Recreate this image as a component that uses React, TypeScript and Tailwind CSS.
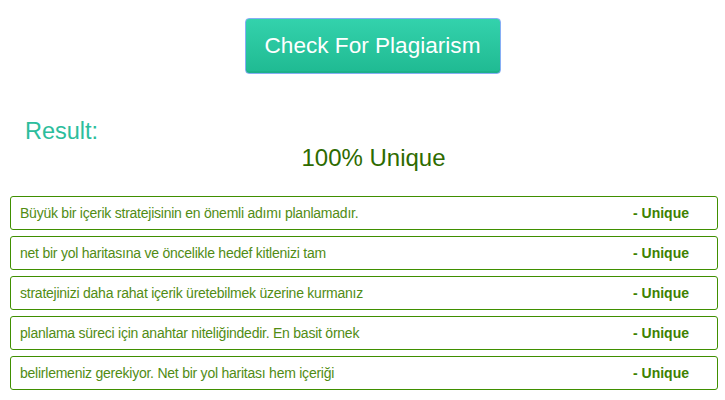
import React from "react";

const rows = [
  "Büyük bir içerik stratejisinin en önemli adımı planlamadır.",
  "net bir yol haritasına ve öncelikle hedef kitlenizi tam",
  "stratejinizi daha rahat içerik üretebilmek üzerine kurmanız",
  "planlama süreci için anahtar niteliğindedir. En basit örnek",
  "belirlemeniz gerekiyor. Net bir yol haritası hem içeriği",
];

export default function App() {
  return (
    <div className="w-[725px] h-[400px] bg-white overflow-hidden" style={{ fontFamily: '"Liberation Sans", Arial, sans-serif' }}>
      <div className="flex justify-center pt-[18px] pl-[20px]">
        <button className="w-[256px] h-[56px] rounded-[4px] border border-[#86aef5] bg-gradient-to-b from-[#33d2ac] to-[#1fba92] text-white text-[22.6px] shadow-[inset_0_-2px_0_rgba(0,0,0,0.06)]">
          Check For Plagiarism
        </button>
      </div>
      <div className="pl-[25px] mt-[44px] text-[23.5px] leading-[26px] text-[#2cbd9c]">Result:</div>
      <div className="pl-[22px] text-center text-[24px] leading-[28px] text-[#2e6b00] mt-[0px]">100% Unique</div>
      <div className="flex flex-col gap-[6px] pl-[10px] pr-[7px] mt-[24px]">
        {rows.map((r) => (
          <div key={r} className="h-[34px] flex items-center justify-between border border-[#3f8f00] rounded-[3px] pl-[9px] pr-[28px]">
            <span className="text-[14px] tracking-[-0.24px] text-[#518c14]">{r}</span>
            <span className="text-[14px] font-bold text-[#3e8200]">- Unique</span>
          </div>
        ))}
      </div>
    </div>
  );
}
